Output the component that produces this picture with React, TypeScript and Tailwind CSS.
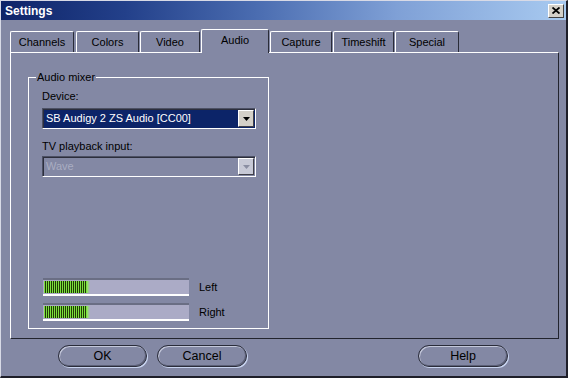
import React from "react";

const tabs = [
  { label: "Channels", w: "w-[64px]", ml: "ml-0" },
  { label: "Colors", w: "w-[63px]", ml: "ml-[2px]" },
  { label: "Video", w: "w-[60px]", ml: "ml-[1px]" },
  { label: "Audio", w: "w-[68px]", ml: "ml-[1px]", active: true },
  { label: "Capture", w: "w-[62px]", ml: "ml-[1px]" },
  { label: "Timeshift", w: "w-[61px]", ml: "ml-[1px]" },
  { label: "Special", w: "w-[64px]", ml: "ml-[1px]" },
];

function Arrow({ color }: { color: string }) {
  return (
    <svg width="7" height="4" viewBox="0 0 7 4">
      <path d="M0 0h7L3.5 4z" fill={color} />
    </svg>
  );
}

function Select({ text, disabled }: { text: string; disabled?: boolean }) {
  return (
    <div
      className={
        "flex h-[21px] w-[214px] items-stretch border border-t-[#4c5064] border-l-[#4c5064] border-b-white border-r-white shadow-[inset_1px_1px_0_#2c2e3c] p-[1px] pl-[1px] " +
        (disabled ? "" : "bg-[#0c2468]")
      }
    >
      <div
        className={
          "flex flex-1 items-center pl-[2px] leading-none " +
          (disabled ? "text-[#a9adc2]" : "text-white")
        }
      >
        {text}
      </div>
      <div
        className={
          "mr-[0px] flex w-[16px] items-center justify-center border border-t-white border-l-white border-b-[#404048] border-r-[#404048] " +
          (disabled ? "bg-[#c7c9d6]" : "bg-[#d4d0c8]")
        }
      >
        <Arrow color={disabled ? "#8a8ea2" : "#000"} />
      </div>
    </div>
  );
}

function Meter({ label }: { label: string }) {
  return (
    <div className="flex items-center">
      <div className="ml-[1px] flex h-[18px] w-[146px] border-t-2 border-t-[#6a6e84] border-b-2 border-b-white bg-[#ababc6] py-[1px] pl-[1px]">
        <div className="h-full w-[43px] bg-[repeating-linear-gradient(90deg,#7be23c_0px,#7be23c_1px,#1f3a06_1px,#1f3a06_2px)]" />
        <div className="h-full w-[3px] bg-[linear-gradient(90deg,#8ee85a,#ababc6)]" />
      </div>
      <span className="ml-[10px] text-[11px] text-black">{label}</span>
    </div>
  );
}

function PillButton({ label, w, ml }: { label: string; w: string; ml: string }) {
  return (
    <div
      className={
        "flex h-[22px] items-center justify-center rounded-full border border-[#2a2c3a] bg-[#8388a4] text-[12.5px] text-black shadow-[inset_1px_1px_0_#c4c8da,inset_-1px_-1px_0_#5c6078,1px_1px_0_#c8d4f0] " +
        w +
        " " +
        ml
      }
    >
      {label}
    </div>
  );
}

export default function App() {
  return (
    <div className="flex h-[378px] w-[568px] flex-col border-l border-t border-l-[#d8dae6] border-t-[#d8dae6] border-r-2 border-b-2 border-r-[#1e1e28] border-b-[#1e1e28] bg-[#8388a4] font-['Liberation_Sans',Arial,sans-serif] text-[11px] text-black">
      {/* Title bar */}
      <div className="flex h-[19px] items-center justify-between bg-[linear-gradient(90deg,#0e2468_0%,#23408a_22%,#4a6cb0_45%,#7fa0d6_70%,#a8caf0_100%)] pl-[4px] pr-[2px]">
        <span className="text-[12px] font-bold text-white">Settings</span>
        <div className="flex h-[14px] w-[16px] items-center justify-center border border-t-white border-l-white border-b-[#404040] border-r-[#404040] bg-[#d4d0c8]">
          <svg width="8" height="7" viewBox="0 0 8 7">
            <path d="M0.5 0.5L7.5 6.5M7.5 0.5L0.5 6.5" stroke="#000" strokeWidth="1.8" />
          </svg>
        </div>
      </div>

      {/* Tabs */}
      <div className="ml-[9px] mt-[9px] flex h-[23px] items-end">
        {tabs.map((t) =>
          t.active ? (
            <div
              key={t.label}
              className={
                "relative z-10 -mb-[1px] flex h-[24px] items-center justify-center rounded-t-[2px] border-l border-t border-r border-l-white border-t-white border-r-[#2a2c38] bg-[#8388a4] pb-[3px] " +
                t.w +
                " " +
                t.ml
              }
            >
              {t.label}
            </div>
          ) : (
            <div
              key={t.label}
              className={
                "flex h-[21px] items-center justify-center rounded-t-[2px] border-l border-t border-r border-l-white border-t-white border-r-[#2a2c38] bg-[#8388a4] " +
                t.w +
                " " +
                t.ml
              }
            >
              {t.label}
            </div>
          )
        )}
      </div>

      {/* Panel */}
      <div className="ml-[9px] flex h-[287px] w-[549px] flex-col border border-t-white border-l-white border-b-[#22242e] border-r-[#22242e]">
        <div className="relative ml-[17px] mt-[24px] flex h-[252px] w-[241px] flex-col border border-white pl-[13px] pt-[12px]">
          <span className="absolute -top-[7px] left-[7px] bg-[#8388a4] px-[1px] leading-[13px]">
            Audio mixer
          </span>
          <div className="leading-[13px]">Device:</div>
          <div className="mt-[5px]">
            <Select text="SB Audigy 2 ZS Audio [CC00]" />
          </div>
          <div className="mt-[11px] leading-[13px]">TV playback input:</div>
          <div className="mt-[3px]">
            <Select text="Wave" disabled />
          </div>
          <div className="mt-[101px] flex flex-col gap-[7px]">
            <Meter label="Left" />
            <Meter label="Right" />
          </div>
        </div>
      </div>

      {/* Buttons */}
      <div className="mt-[6px] flex">
        <PillButton label="OK" w="w-[89px]" ml="ml-[57px]" />
        <PillButton label="Cancel" w="w-[90px]" ml="ml-[10px]" />
        <PillButton label="Help" w="w-[90px]" ml="ml-[171px]" />
      </div>
    </div>
  );
}
